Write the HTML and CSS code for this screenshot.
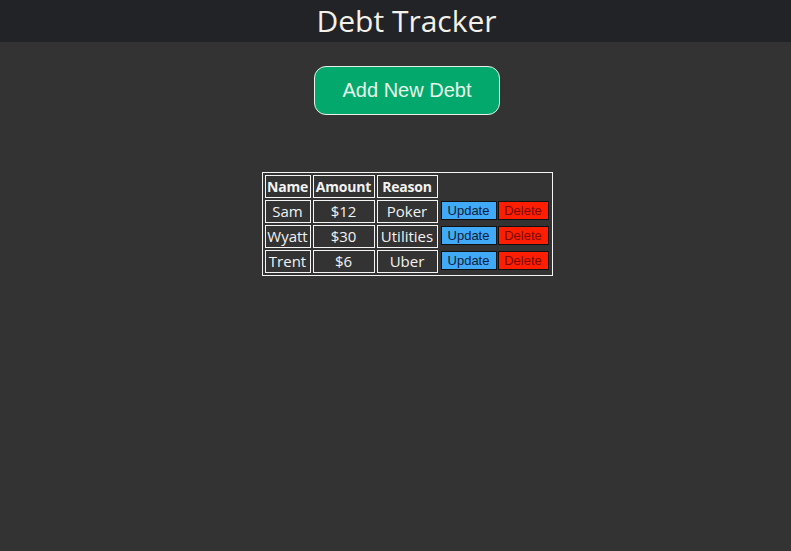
FILE: index.html
```html
<!DOCTYPE html>
<html>
<head>
<meta charset="utf-8">
<title>Debt Tracker</title>
<link rel="stylesheet" href="styles.css">
</head>
<body>
<header class="topbar"><h1 class="title">Debt Tracker</h1></header>
<main class="content">
  <button class="add-btn">Add New Debt</button>
  <table class="debts">
    <tr><th class="c-name">Name</th><th class="c-amt">Amount</th><th class="c-reason">Reason</th></tr>
    <tr><td>Sam</td><td>$12</td><td>Poker</td><td class="actions"><button class="upd">Update</button><button class="del">Delete</button></td></tr>
    <tr><td>Wyatt</td><td>$30</td><td>Utilities</td><td class="actions"><button class="upd">Update</button><button class="del">Delete</button></td></tr>
    <tr><td>Trent</td><td>$6</td><td>Uber</td><td class="actions"><button class="upd">Update</button><button class="del">Delete</button></td></tr>
  </table>
</main>
</body>
</html>
```
FILE: styles.css
```css
html, body { margin: 0; padding: 0; }
body {
  background: #333333;
  color: #f2f2f2;
  font-family: "Open Sans", "DejaVu Sans", sans-serif;
  min-height: 551px;
}
.topbar {
  background: #222326;
  height: 42px;
  display: flex;
  justify-content: center;
  align-items: center;
  padding-left: 22px;
}
.title {
  margin: 0;
  font-weight: normal;
  font-size: 30px;
  color: #f4f1ea;
  line-height: 42px;
}
.content {
  display: flex;
  flex-direction: column;
  align-items: center;
  padding-left: 23px;
}
.add-btn {
  margin-top: 24px;
  width: 186px;
  height: 49px;
  background: #03a96c;
  color: #e6f6ea;
  border: 1px solid #e8f0e8;
  border-radius: 12px;
  font-family: "Liberation Sans", Arial, sans-serif;
  font-size: 20px;
  cursor: pointer;
}
.debts {
  margin-top: 57px;
  border: 1px solid #f4f4f4;
  border-spacing: 2px;
  font-size: 15px;
}
.debts th, .debts td {
  border: 1px solid #f4f4f4;
  padding: 0 1px;
  text-align: center;
  height: 21px;
  line-height: 19px;
  white-space: nowrap;
}
.debts th { font-weight: bold; font-size: 14px; letter-spacing: -0.2px; }
.c-name { width: 42px; }
.c-amt { width: 58px; }
.c-reason { width: 57px; }
.debts td.actions { border: none; padding: 0 1px; }
.upd, .del {
  font-family: "Liberation Sans", Arial, sans-serif;
  font-size: 13px;
  border: 1px solid #111;
  padding: 0;
  margin: 0 0 2px 0;
  height: 19px;
  vertical-align: middle;
}
.upd { background: #40aaf6; width: 56px; color: #10203a; }
.del { background: #ff1f00; width: 51px; margin-left: 1px; color: #7c0800; }
```
